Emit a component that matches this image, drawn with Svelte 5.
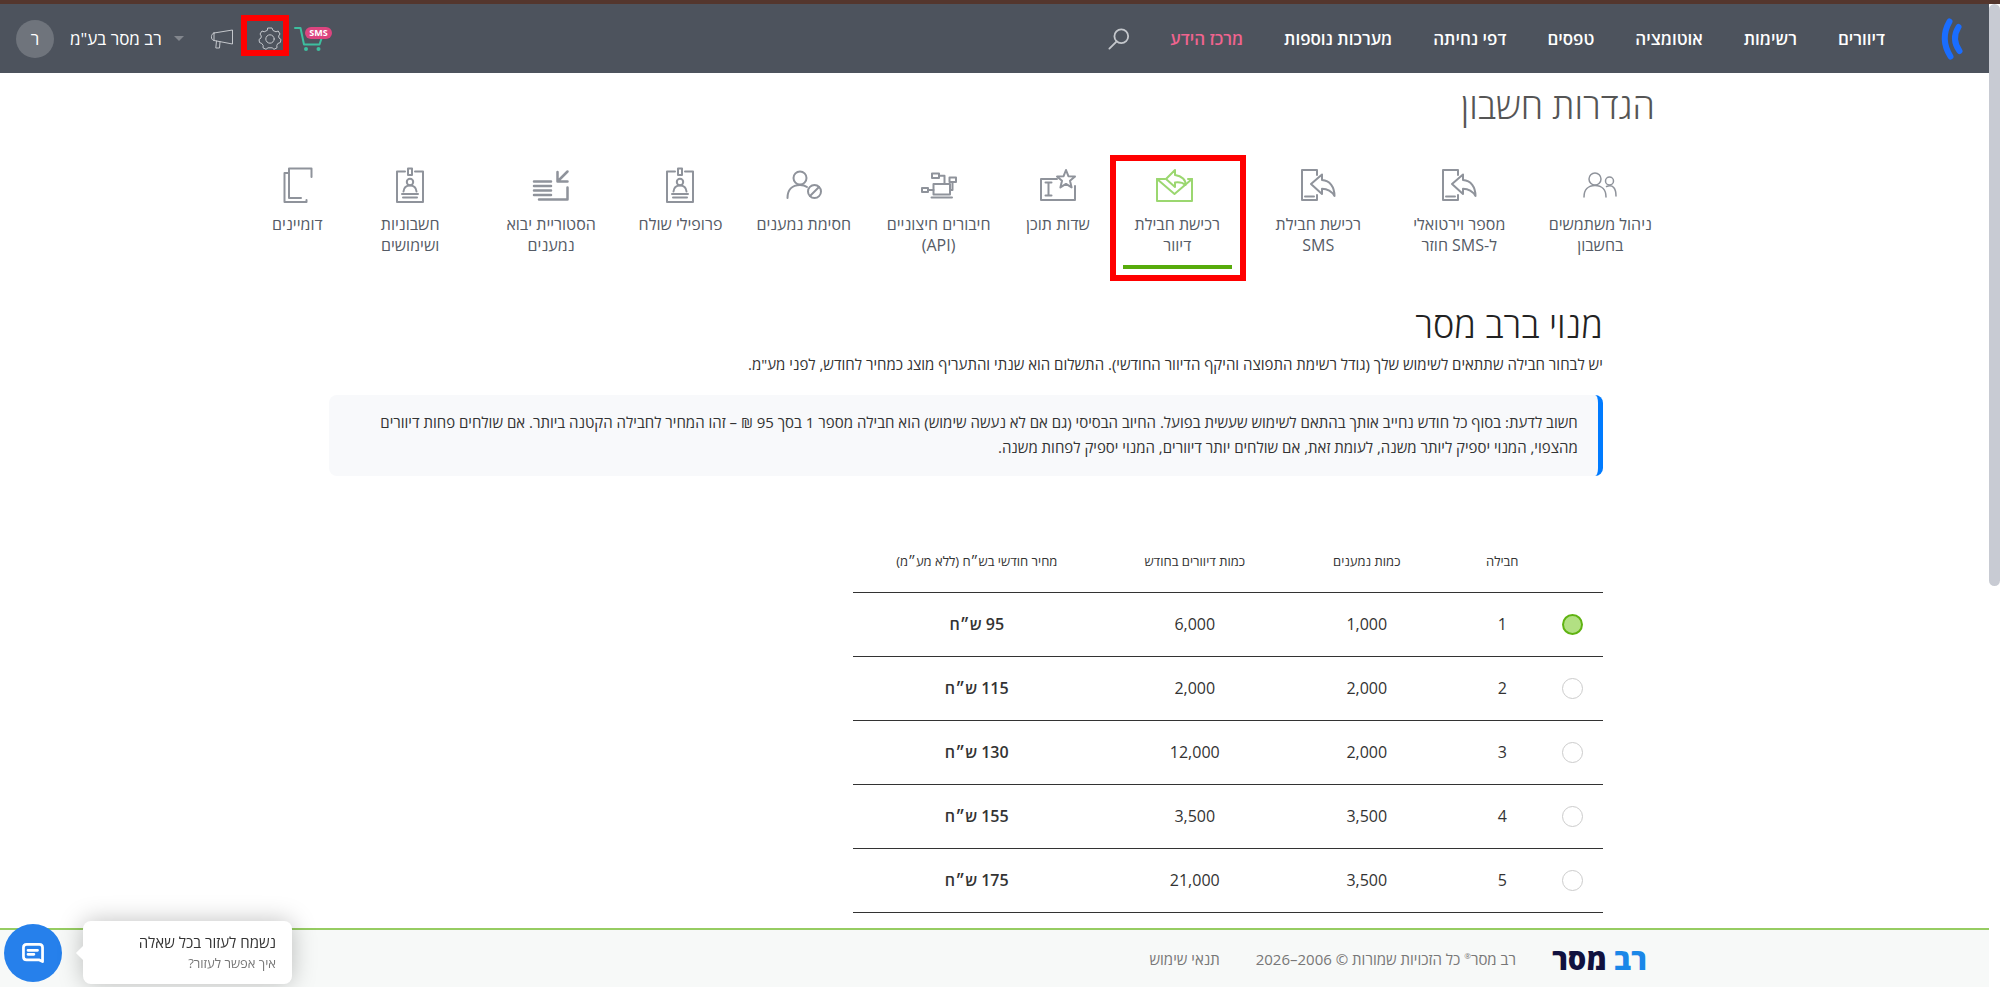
<script>
    let selected = $state(1);

    const navLinks = [
        { text: 'דיוורים' },
        { text: 'רשימות' },
        { text: 'אוטומציה' },
        { text: 'טפסים' },
        { text: 'דפי נחיתה' },
        { text: 'מערכות נוספות' },
        { text: 'מרכז הידע', highlight: true }
    ];

    const tabs = [
        { icon: 'users', lines: ['ניהול משתמשים', 'בחשבון'] },
        { icon: 'phone', lines: ['מספר וירטואלי', 'ל-SMS חוזר'] },
        { icon: 'phone', lines: ['רכישת חבילת', 'SMS'] },
        { icon: 'envelope', lines: ['רכישת חבילת', 'דיוור'], active: true },
        { icon: 'field', lines: ['שדות תוכן'] },
        { icon: 'api', lines: ['חיבורים חיצוניים', '(API)'] },
        { icon: 'block', lines: ['חסימת נמענים'] },
        { icon: 'badge', lines: ['פרופילי שולח'] },
        { icon: 'import', lines: ['הסטוריית יבוא', 'נמענים'] },
        { icon: 'badge', lines: ['חשבוניות', 'ושימושים'] },
        { icon: 'pages', lines: ['דומיינים'] }
    ];

    const packages = [
        { id: 1, recipients: '1,000', mails: '6,000', price: 95 },
        { id: 2, recipients: '2,000', mails: '2,000', price: 115 },
        { id: 3, recipients: '2,000', mails: '12,000', price: 130 },
        { id: 4, recipients: '3,500', mails: '3,500', price: 155 },
        { id: 5, recipients: '3,500', mails: '21,000', price: 175 }
    ];
</script>

{#snippet tabIcon(name)}
    <svg class="tab-icon" viewBox="0 0 36 36" aria-hidden="true">
        {#if name === 'users'}
            <circle class="thin" cx="13" cy="12" r="6" />
            <path class="thin" d="M2 30C2 23 6 18.500 13 18.500S24 23 24 30" />
            <circle class="thin" cx="27.500" cy="14" r="4" />
            <path class="thin" d="M24.500 19.500C31 17 34 21.500 34 29" />
        {:else if name === 'phone'}
            <path d="M17 8V3H2V33H17V28" />
            <path d="M5 29.500H14" />
            <path d="M11 17L22 7.500V13C30 13.500 34.500 20 34.500 29C31.500 24 28 21.800 22 21.800V27Z" />
        {:else if name === 'envelope'}
            <path d="M6 12H-2V34H33V12H29" />
            <path d="M-2 12L15.500 27L33 12" />
            <path d="M7 12L16 3V8C23 9 27 13 26.500 18C23 15 20 15 16 15.500V20Z" />
        {:else if name === 'field'}
            <path d="M17 12H1V33H35V19" />
            <path d="M5.500 15.500H11.500M5.500 28.500H11.500M8.500 15.500V28.500" />
            <path d="M26 3L28.400 9.200L35 9.600L30 13.800L31.600 20.400L26 16.900L20.400 20.400L22 13.800L17 9.600L23.600 9.200Z" />
        {:else if name === 'api'}
            <path d="M12.500 17H29V27.500H12.500ZM10.500 30.500H31" />
            <path d="M1 21H7V25H1ZM11 6.500H18V11H11ZM28.500 10.500H35V15H28.500Z" />
            <path d="M7 23H12.500M18 8.800H23.500V17M31.500 15V23H29" />
        {:else if name === 'block'}
            <circle cx="14" cy="11" r="6.500" />
            <path d="M1.500 31C1.500 23 6 18 14 18C17 18 19 18.500 21 20" />
            <circle cx="28.500" cy="24.500" r="6.500" />
            <path d="M24 29L33 20" />
        {:else if name === 'badge'}
            <path d="M13 4.500H5V35H31V4.500H23" />
            <path d="M16 1.500H20V8H16Z" />
            <circle cx="18" cy="15" r="3.200" />
            <path d="M11.500 24.500C12 20 14 18.500 18 18.500S24 20 24.500 24.500M10 27H26M11 30.500H25" />
        {:else if name === 'import'}
            <path class="bold" d="M1 14.500H18M1 19H18M1 23.500H18M1 28H18" />
            <path class="bold" d="M6 32.500H34.500V20.500M34.500 4.500L25 14M24.500 5V14.500H34.500" />
        {:else}
            <path d="M10 31H22M10 31V1.500H32.500V10" />
            <path d="M10 6H5.500V35H27.500V33" />
        {/if}
    </svg>
{/snippet}

<div class="page" dir="rtl" lang="he">
    <div class="strip"></div>

    <div class="view">
        <header class="topbar">
            <a class="brand" href="#home" aria-label="רב מסר">
                <svg width="24" height="44" viewBox="0 0 24 44" aria-hidden="true">
                    <path d="M8.500 4.500Q-1.500 22 9.500 39.500" />
                    <path d="M17.500 10Q10 22 18.500 34" />
                </svg>
            </a>

            <nav class="main-nav">
                {#each navLinks as link}
                    <a href="#nav" class:highlight={link.highlight}>{link.text}</a>
                {/each}
            </nav>

            <button class="icon-btn search" aria-label="חיפוש">
                <svg width="22" height="22" viewBox="0 0 24 24" aria-hidden="true">
                    <circle cx="14.500" cy="9" r="7.500" />
                    <path d="M9.500 14.500L1.500 22.500" />
                </svg>
            </button>

            <div class="tools">
                <button class="icon-btn" aria-label="רכישת SMS">
                    <svg class="cart" width="38" height="26" viewBox="0 0 38 26" aria-hidden="true">
                        <path d="M1 2H6.500L10 18.500H25.500L28 11" />
                        <circle cx="12" cy="23" r="2" />
                        <circle cx="24.500" cy="23" r="2" />
                        <rect x="11" y="1" width="27" height="12" rx="6" />
                        <text x="24.500" y="10" text-anchor="middle">SMS</text>
                    </svg>
                </button>
                <button class="icon-btn gear marked" aria-label="הגדרות">
                    <svg width="24" height="24" viewBox="0 0 24 24" aria-hidden="true">
                        <circle cx="12" cy="12" r="4.200" />
                        <path d="M10 1H14L15 3.500L18 4.800L20.200 4L22 7L20.600 9L21 11L23 12.500L22.300 15.500L19.800 16.500L18.800 18.500L19 20.800L16 22.300L14.200 20.800H10L8 22.300L5 20.800L5.200 18.500L3.800 16.500L1.500 15.500L1 12.500L3 11L3.300 9L2 7L4 4L6.200 4.800L9 3.500Z" />
                    </svg>
                </button>
                <button class="icon-btn megaphone" aria-label="הודעות">
                    <svg width="24" height="22" viewBox="0 0 24 22" aria-hidden="true">
                        <path d="M4 5L22.500 2V16L4 12.500C0.500 12 0.500 5.500 4 5ZM4 5V12.500M6.500 13L5.800 20H9.500L10 13.800" />
                    </svg>
                </button>
            </div>

            <button class="account">
                <span class="caret"></span>
                <span>רב מסר בע"מ</span>
                <span class="avatar">ר</span>
            </button>
        </header>

        <main>
            <h1>הגדרות חשבון</h1>

            <nav class="tabs">
                {#each tabs as tab}
                    <a href="#tab" class="tab" class:wide={tab.lines.length > 1} class:active={tab.active}>
                        {@render tabIcon(tab.icon)}
                        <span class="tab-label">
                            {#each tab.lines as line}
                                <span>{line}</span>
                            {/each}
                        </span>
                    </a>
                {/each}
            </nav>

            <section class="content">
                <h2>מנוי ברב מסר</h2>
                <p class="intro">
                    יש לבחור חבילה שתתאים לשימוש שלך (גודל רשימת התפוצה והיקף הדיוור החודשי). התשלום הוא שנתי והתעריף מוצג כמחיר לחודש, לפני מע"מ.
                </p>
                <p class="notice">
                    חשוב לדעת: בסוף כל חודש נחייב אותך בהתאם לשימוש שעשית בפועל. החיוב הבסיסי (גם אם לא נעשה שימוש) הוא חבילה מספר 1 בסך 95 ₪ – זהו המחיר לחבילה הקטנה ביותר. אם שולחים פחות דיוורים מהצפוי, המנוי יספיק ליותר משנה, לעומת זאת, אם שולחים יותר דיוורים, המנוי יספיק לפחות משנה.
                </p>

                <table>
                    <thead>
                        <tr>
                            <th class="col-radio"></th>
                            <th class="col-package">חבילה</th>
                            <th class="col-recipients">כמות נמענים</th>
                            <th class="col-mails">כמות דיוורים בחודש</th>
                            <th class="col-price">מחיר חודשי בש״ח (ללא מע״מ)</th>
                        </tr>
                    </thead>
                    <tbody>
                        {#each packages as pack}
                            <tr>
                                <td><input type="radio" id="package-{pack.id}" name="package" value={pack.id} bind:group={selected} /></td>
                                <td class="col-package"><label for="package-{pack.id}">{pack.id}</label></td>
                                <td>{pack.recipients}</td>
                                <td>{pack.mails}</td>
                                <td class="price">{pack.price} ש״ח</td>
                            </tr>
                        {/each}
                    </tbody>
                </table>
            </section>
        </main>

        <footer>
            <a class="wordmark" href="#home"><span>רב</span> מסר</a>
            <span class="rights">רב מסר<sup>®</sup> כל הזכויות שמורות © 2006–2026</span>
            <a class="terms" href="#terms">תנאי שימוש</a>
        </footer>
    </div>

    <div class="scrollbar"><div class="thumb"></div></div>

    <div class="chat">
        <div class="bubble">
            <div class="bubble-title">נשמח לעזור בכל שאלה</div>
            <div class="bubble-text">איך אפשר לעזור?</div>
        </div>
        <button class="chat-btn" aria-label="צ'אט">
            <svg width="22" height="20" viewBox="0 0 24 22" aria-hidden="true">
                <path d="M5 1.500H19Q22.500 1.500 22.500 5V20.500L18.500 18.500H5Q1.500 18.500 1.500 15V5Q1.500 1.500 5 1.500Z" />
                <path d="M6.500 8H17M6.500 12.500H13" />
            </svg>
        </button>
    </div>
</div>

<style>
    :global(body) {
        margin: 0;
        background: #fff;
    }

    .page {
        display: grid;
        grid-template-columns: 11px 1fr;
        grid-template-rows: 4px 1fr;
        min-height: 100vh;
        font-family: "Open Sans", "Liberation Sans", sans-serif;
        font-size: 15px;
        color: #333;
    }

    .page * {
        box-sizing: border-box;
    }

    a {
        color: inherit;
        text-decoration: none;
    }

    button {
        border: 0;
        padding: 0;
        background: none;
        font: inherit;
        color: inherit;
        cursor: pointer;
    }

    svg {
        display: block;
        overflow: visible;
        fill: none;
        stroke: currentColor;
        stroke-linecap: round;
        stroke-linejoin: round;
    }

    .strip {
        grid-column: 1 / 3;
        background: #54362d;
    }

    .view {
        grid-column: 2;
        grid-row: 2;
        display: flex;
        flex-direction: column;
        min-width: 0;
    }

    .scrollbar {
        grid-column: 1;
        grid-row: 2;
        background: #fff;
    }

    .thumb {
        height: 59vh;
        border-radius: 6px;
        background: #c8cbd3;
    }

    /* top bar */
    .topbar {
        display: flex;
        align-items: center;
        height: 69px;
        padding: 0 24px 0 16px;
        background: #4d535d;
        color: #fff;
    }

    .brand {
        margin-left: 56px;
        color: #1a6dff;
    }

    .brand svg {
        stroke-width: 6;
    }

    .main-nav {
        display: flex;
        gap: 41px;
        font-size: 17px;
        font-weight: 600;
        line-height: 24px;
        white-space: nowrap;
    }

    .highlight {
        color: #f0648f;
    }

    .icon-btn {
        display: flex;
        color: #c4c7cc;
    }

    .search {
        margin-right: 40px;
    }

    .search svg {
        stroke-width: 2;
    }

    .tools {
        display: flex;
        align-items: center;
        gap: 24px;
        margin-right: auto;
    }

    .tools .icon-btn:first-child {
        margin-left: -12px;
    }

    .marked {
        position: relative;
    }

    /* attention frame drawn over the control */
    .marked::after {
        content: "";
        position: absolute;
        border: 6px solid #f00;
    }

    .gear.marked::after {
        inset: -12px -7px -5px -17px;
    }

    .cart {
        color: #3dbf9f;
        stroke-width: 2;
    }

    .cart circle {
        fill: currentColor;
        stroke: none;
    }

    .cart rect {
        fill: #dc457f;
        stroke: none;
    }

    .cart text {
        fill: #fff;
        stroke: none;
        font-family: "Open Sans", sans-serif;
        font-size: 9px;
        font-weight: 700;
    }

    .account {
        display: flex;
        align-items: center;
        margin-right: 26px;
        font-size: 17px;
        font-weight: 500;
    }

    .caret {
        margin-left: 12px;
        border: 5px solid transparent;
        border-top-color: #82868d;
        border-bottom: 0;
    }

    .avatar {
        display: grid;
        place-items: center;
        width: 38px;
        height: 38px;
        margin-right: 16px;
        border-radius: 50%;
        background: #6f747c;
    }

    main {
        padding-right: 16%;
    }

    h1 {
        margin: 0 16px 0 0;
        padding: 9px 0 7px;
        font-size: 36px;
        font-weight: 300;
        line-height: 48px;
        color: #555;
    }

    /* settings tabs */
    .tabs {
        display: flex;
        padding-top: 30px;
    }

    .tab {
        position: relative;
        display: flex;
        flex-direction: column;
        align-items: center;
        flex: none;
        height: 102px;
        padding: 0 17px;
        color: #8f939b;
    }

    .tab.wide {
        width: 141px;
    }

    .tab-icon {
        width: 36px;
        height: 36px;
        stroke-width: 2;
    }

    .thin {
        stroke-width: 1.5;
    }

    .bold {
        stroke-width: 2.5;
    }

    .tab-label {
        display: flex;
        flex-direction: column;
        align-items: center;
        margin-top: 11px;
        font-size: 16px;
        line-height: 21px;
        color: #555b66;
        white-space: nowrap;
    }

    .active {
        color: #9bd770;
    }

    .active::before {
        content: "";
        position: absolute;
        inset: auto 16px 0;
        height: 4px;
        background: #57ab0b;
    }

    .active::after {
        content: "";
        position: absolute;
        inset: -12px 2px -12px 3px;
        border: 6px solid #f00;
    }

    /* package selection */
    .content {
        max-width: 1274px;
        margin-right: 68px;
        padding-top: 32px;
    }

    h2 {
        margin: 0;
        font-size: 36px;
        font-weight: 300;
        line-height: 48px;
        color: #222;
    }

    .intro {
        margin: 3px 0 18px;
        line-height: 25px;
    }

    .notice {
        margin: 0;
        padding: 15px 20px 16px 24px;
        border-right: 5px solid #007bff;
        border-radius: 8px;
        background: #f8f9fb;
        line-height: 25px;
    }

    table {
        width: 750px;
        margin-top: 52px;
        border-collapse: collapse;
        table-layout: fixed;
        text-align: center;
    }

    tr {
        height: 64px;
        border-bottom: 1px solid #333;
    }

    th,
    td {
        padding: 0;
    }

    th {
        padding-top: 2px;
        font-size: 13px;
        font-weight: 400;
    }

    td {
        font-size: 16px;
    }

    .col-radio {
        width: 61px;
    }

    .col-package {
        width: 97px;
        padding-left: 18px;
    }

    .col-recipients {
        width: 156px;
    }

    .col-mails {
        width: 188px;
    }

    .price {
        font-weight: 600;
    }

    input[type="radio"] {
        appearance: none;
        display: block;
        width: 21px;
        height: 21px;
        margin: 0 auto;
        border: 1px solid #ccc;
        border-radius: 50%;
        background: #fff;
    }

    input[type="radio"]:checked {
        border: 2px solid #5fb312;
        background: #b2e083;
    }

    footer {
        display: flex;
        align-items: center;
        height: 59px;
        margin-top: auto;
        padding-right: 342px;
        border-top: 2px solid #96cc62;
        background: #f7f9f8;
        color: #777;
    }

    .wordmark {
        font-size: 29px;
        font-weight: 800;
        line-height: 40px;
        color: #11113f;
    }

    .wordmark span {
        color: #1a87e8;
    }

    .rights {
        margin: 0 36px;
    }

    sup {
        font-size: 8px;
        line-height: 8px;
    }

    /* chat launcher */
    .chat {
        position: fixed;
        left: 4px;
        bottom: 3px;
        display: flex;
        align-items: center;
        gap: 21px;
    }

    .chat-btn {
        display: grid;
        place-items: center;
        width: 58px;
        height: 58px;
        border-radius: 50%;
        background: #2680eb;
        color: #fff;
    }

    .chat-btn svg {
        stroke-width: 3;
    }

    .bubble {
        position: relative;
        width: 209px;
        padding: 10px 16px;
        border-radius: 8px;
        background: #fff;
        box-shadow: 0 0 24px rgba(0, 0, 0, 0.25);
    }

    .bubble::before {
        content: "";
        position: absolute;
        top: 50%;
        left: -5px;
        width: 10px;
        height: 10px;
        background: #fff;
        transform: translateY(-50%) rotate(45deg);
    }

    .bubble-title {
        font-size: 15px;
        line-height: 22px;
        color: #333;
    }

    .bubble-text {
        font-size: 13px;
        line-height: 21px;
        color: #777;
    }
</style>
